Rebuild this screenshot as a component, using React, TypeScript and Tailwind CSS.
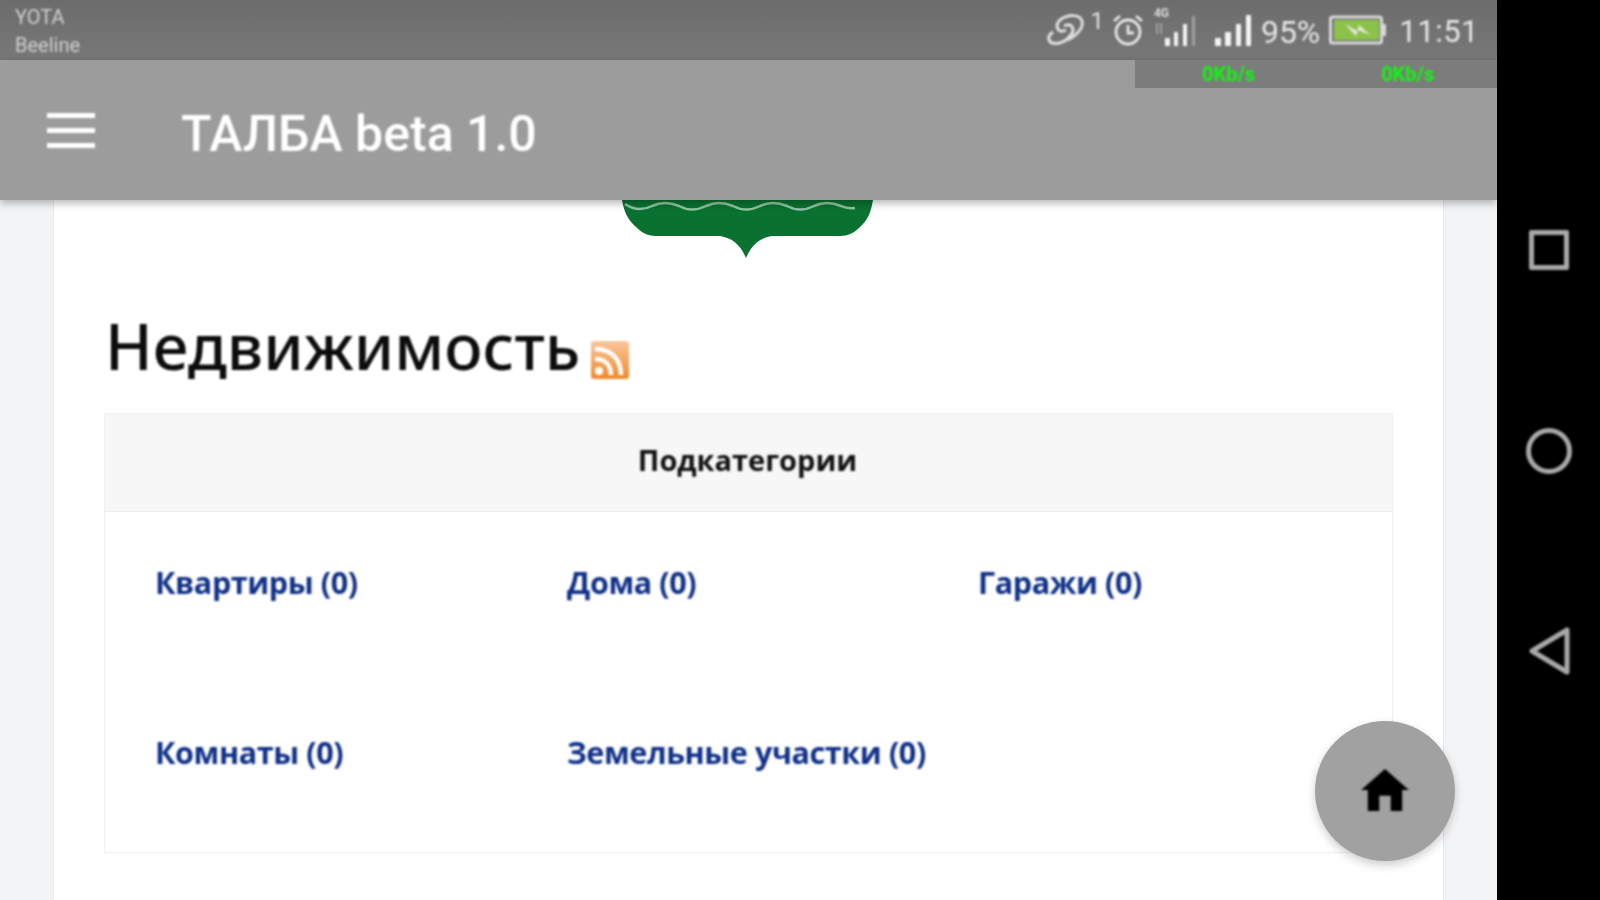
import React from "react";

function StatusIcons() {
  return (
    <div className="flex items-center h-full text-[#dcdcdc] font-['Roboto',sans-serif] blur-[0.8px]">
      <svg width="40" height="36" viewBox="0 0 40 36" fill="none" stroke="#e0e0e0" strokeWidth="3">
        <path d="M20 18 C12 22 8 14 14 8 C22 2 34 2 36 9 C38 16 30 24 22 28" />
        <path d="M18 14 C26 10 30 18 24 24 C18 32 6 34 3 28 C2 25 4 22 7 20" />
      </svg>
      <span className="text-[24px] leading-none self-start mt-[9px] ml-[4px] text-[#e0e0e0]">1</span>
      <svg width="32" height="34" viewBox="0 0 32 34" fill="none" stroke="#e6e6e6" strokeWidth="2.8" className="ml-[8px]">
        <circle cx="16" cy="19" r="12" />
        <path d="M16 12 V20 H22" />
        <path d="M2 8 L8 3 M30 8 L24 3" />
      </svg>
      <div className="relative w-[44px] h-[40px] ml-[10px]">
        <span className="absolute left-0 top-[-3px] text-[12px] font-bold leading-none text-[#dcdcdc]">4G</span>
        <svg width="44" height="40" viewBox="0 0 44 40" className="absolute left-0 top-0">
          <rect x="11" y="28" width="5" height="8" fill="#f4f4f4" />
          <rect x="20" y="22" width="4" height="14" fill="#f4f4f4" />
          <rect x="29" y="14" width="4" height="22" fill="#f4f4f4" />
          <rect x="38" y="6" width="3" height="30" fill="#a0a0a0" />
          <path d="M3 13 V24 M7 13 V24" stroke="#a0a0a0" strokeWidth="2" />
        </svg>
      </div>
      <svg width="40" height="36" viewBox="0 0 40 36" className="ml-[15px]">
        <rect x="2" y="26" width="6" height="8" fill="#f4f4f4" />
        <rect x="12" y="20" width="6" height="14" fill="#f4f4f4" />
        <rect x="23" y="12" width="5" height="22" fill="#f4f4f4" />
        <rect x="33" y="3" width="5" height="31" fill="#f4f4f4" />
      </svg>
      <span className="text-[32px] leading-none ml-[8px] mt-[3px] text-[#e6e6e6]">95%</span>
      <svg width="58" height="32" viewBox="0 0 58 32" className="ml-[9px]">
        <rect x="1.5" y="3" width="51" height="26" rx="2" fill="none" stroke="#d8d8d8" strokeWidth="3" />
        <rect x="5" y="6" width="45" height="20" fill="#8bc34a" />
        <rect x="53" y="10" width="4" height="12" rx="1" fill="#d8d8d8" />
        <path d="M16 10 L28 17 L30 11 L41 21 L29 16 L27 22 Z" fill="#e8e8e8" />
      </svg>
      <span className="text-[31px] leading-none ml-[12px] mt-[3px] tracking-[0.5px] text-[#e6e6e6]">11:51</span>
    </div>
  );
}

function Crest() {
  return (
    <svg width="252" height="58" viewBox="0 0 252 58" className="block">
      <path d="M0 0 H251 C249 12 246 20 238 27 C232 33 226 36 218 36 H150 C138 38 130 44 124 58 C118 44 110 38 98 36 H34 C26 36 20 33 14 27 C6 20 2 12 0 0 Z" fill="#0a7230" />
      <path d="M3 4 q13 9 27 2 q13 -6 27 0 q13 7 27 0 q13 -6 27 0 q13 7 27 0 q13 -6 27 0 q13 7 27 0 q13 -6 27 0 q6 3 14 2" fill="none" stroke="#8cc4a0" strokeWidth="2.5" />
    </svg>
  );
}

function Rss() {
  return (
    <svg width="38" height="38" viewBox="0 0 38 38" className="block blur-[0.8px]">
      <defs>
        <linearGradient id="rssg" x1="0" y1="0" x2="0" y2="1">
          <stop offset="0" stopColor="#f9c79b" />
          <stop offset="1" stopColor="#ee8a2c" />
        </linearGradient>
      </defs>
      <rect width="38" height="38" rx="3" fill="url(#rssg)" />
      <circle cx="8" cy="30" r="4" fill="#fff" />
      <path d="M4 18 C14 18 20 24 20 34" fill="none" stroke="#fff" strokeWidth="4.5" />
      <path d="M4 8 C20 8 30 18 30 34" fill="none" stroke="#fff" strokeWidth="4.5" />
    </svg>
  );
}

const links = ["Квартиры (0)", "Дома (0)", "Гаражи (0)", "Комнаты (0)", "Земельные участки (0)"];

export default function App() {
  return (
    <div className="relative flex w-[1600px] h-[900px] overflow-hidden bg-black font-['Roboto',sans-serif]">
      <div className="relative flex flex-col w-[1497px] h-full bg-[#f3f4f6]">
        <div className="flex h-[60px] shrink-0 items-center justify-between bg-gradient-to-b from-[#6c6c6c] to-[#787878] pl-[15px] pr-[18px]">
          <div className="flex flex-col text-[20px] leading-[28px] text-[#d0d0d0] pt-[2px] blur-[0.8px]">
            <span>YOTA</span>
            <span>Beeline</span>
          </div>
          <StatusIcons />
        </div>
        <div className="relative z-10 flex h-[140px] shrink-0 items-center bg-[#9c9c9c] shadow-[0_3px_8px_rgba(0,0,0,0.3)]">
          <svg width="48" height="35" viewBox="0 0 48 35" className="ml-[47px] blur-[0.8px]" fill="#fff">
            <rect width="48" height="5" />
            <rect y="15" width="48" height="5" />
            <rect y="30" width="48" height="5" />
          </svg>
          <span className="ml-[86px] mt-[8px] text-[50px] font-medium leading-none text-white blur-[0.8px]">ТАЛБА beta 1.0</span>
          <div className="absolute right-0 top-0 flex h-[28px] w-[362px] items-center bg-[#7c7c7c] text-[20px] font-bold leading-none text-[#12f512]">
            <span className="ml-[67px] blur-[0.8px]">0Kb/s</span>
            <span className="ml-[126px] blur-[0.8px]">0Kb/s</span>
          </div>
        </div>
        <div className="mx-[53px] flex flex-1 flex-col border-x border-[#e7e8ea] bg-white">
          <div className="flex justify-center pr-[2px]">
            <Crest />
          </div>
          <div className="mt-[50px] ml-[51px] flex items-end">
            <h1 className="font-['Noto_Sans',sans-serif] text-[63.5px] font-medium leading-[76px] text-[#0c0c0c] blur-[0.8px]">Недвижимость</h1>
            <div className="ml-[11px] mb-[5px]"><Rss /></div>
          </div>
          <div className="mx-[50px] mt-[29px] border border-[#f0f0f0]">
            <div className="flex h-[98px] items-center justify-center border-b border-[#eeeeee] bg-[#f7f7f7] pr-[2px] pb-[6px] font-['Open_Sans',sans-serif] text-[29px] font-bold text-[#111]">
              <span className="blur-[0.8px]">Подкатегории</span>
            </div>
            <div className="grid grid-cols-[412px_411px_1fr] pl-[50px] pt-[48px] pb-[78px] gap-y-[126px] font-['Open_Sans',sans-serif] text-[30.5px] font-bold leading-[44px] tracking-[-0.4px] text-[#0f3088]">
              {links.map((l) => (
                <div key={l} className="blur-[0.8px]">{l}</div>
              ))}
            </div>
          </div>
        </div>
        <div className="absolute right-[42px] top-[721px] flex h-[140px] w-[140px] items-center justify-center rounded-full bg-[#a1a1a1] pb-[3px] shadow-[0_4px_10px_rgba(0,0,0,0.2)]">
          <svg width="48" height="42" viewBox="0 0 50 44" className="blur-[0.8px]"><path d="M25 0 L50 22 H43 V44 H31 V28 H19 V44 H7 V22 H0 Z" fill="#000" /></svg>
        </div>
      </div>
      <div className="flex w-[103px] flex-col items-center bg-black pt-[230px] text-[#a0a0a0]">
        <div className="h-[40px] w-[40px] rounded-[2px] border-[5px] border-[#a8a8a8] blur-[0.8px]" />
        <div className="mt-[158px] h-[46px] w-[46px] rounded-full border-[5px] border-[#a8a8a8] blur-[0.8px]" />
        <svg width="42" height="48" viewBox="0 0 42 48" className="mt-[153px] blur-[0.8px]">
          <path d="M39 3 V45 L4 24 Z" fill="none" stroke="#a8a8a8" strokeWidth="5" strokeLinejoin="round" />
        </svg>
      </div>
    </div>
  );
}
